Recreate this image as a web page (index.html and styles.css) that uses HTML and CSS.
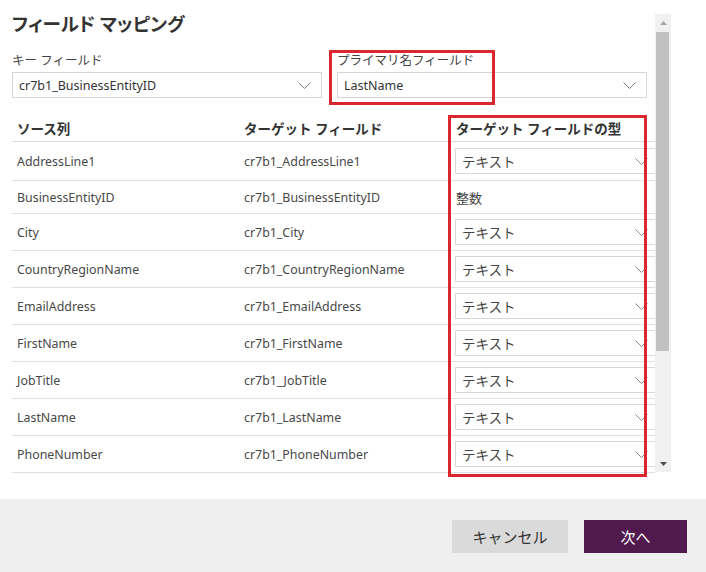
FILE: index.html
```html
<!DOCTYPE html>
<html lang="ja">
<head>
<meta charset="utf-8">
<title>フィールド マッピング</title>
<link rel="stylesheet" href="styles.css">
</head>
<body>
<div class="dialog">
  <div class="main">
    <div class="scroll">
      <div class="content">
        <h1 class="title">フィールド マッピング</h1>
        <div class="fields">
          <div class="field">
            <div class="field-label">キー フィールド</div>
            <div class="select">
              <span>cr7b1_BusinessEntityID</span>
              <svg class="chev" width="13" height="7" viewBox="0 0 13 7"><path d="M0.5 0.5 L6.5 6.5 L12.5 0.5" fill="none" stroke="#7a7a7a" stroke-width="1"/></svg>
            </div>
          </div>
          <div class="field">
            <div class="field-label">プライマリ名フィールド</div>
            <div class="select">
              <span>LastName</span>
              <svg class="chev" width="13" height="7" viewBox="0 0 13 7"><path d="M0.5 0.5 L6.5 6.5 L12.5 0.5" fill="none" stroke="#7a7a7a" stroke-width="1"/></svg>
            </div>
          </div>
        </div>

        <div class="table">
          <div class="row head">
            <div class="cell">ソース列</div>
            <div class="cell">ターゲット フィールド</div>
            <div class="cell">ターゲット フィールドの型</div>
          </div>
          <div class="row first">
            <div class="cell">AddressLine1</div>
            <div class="cell">cr7b1_AddressLine1</div>
            <div class="cell type"><div class="tselect"><span>テキスト</span><svg class="chev" width="13" height="7" viewBox="0 0 13 7"><path d="M0.5 0.5 L6.5 6.5 L12.5 0.5" fill="none" stroke="#8a8a8a" stroke-width="1"/></svg></div></div>
          </div>
          <div class="row plain">
            <div class="cell">BusinessEntityID</div>
            <div class="cell">cr7b1_BusinessEntityID</div>
            <div class="cell type-text">整数</div>
          </div>
          <div class="row">
            <div class="cell">City</div>
            <div class="cell">cr7b1_City</div>
            <div class="cell type"><div class="tselect"><span>テキスト</span><svg class="chev" width="13" height="7" viewBox="0 0 13 7"><path d="M0.5 0.5 L6.5 6.5 L12.5 0.5" fill="none" stroke="#8a8a8a" stroke-width="1"/></svg></div></div>
          </div>
          <div class="row">
            <div class="cell">CountryRegionName</div>
            <div class="cell">cr7b1_CountryRegionName</div>
            <div class="cell type"><div class="tselect"><span>テキスト</span><svg class="chev" width="13" height="7" viewBox="0 0 13 7"><path d="M0.5 0.5 L6.5 6.5 L12.5 0.5" fill="none" stroke="#8a8a8a" stroke-width="1"/></svg></div></div>
          </div>
          <div class="row">
            <div class="cell">EmailAddress</div>
            <div class="cell">cr7b1_EmailAddress</div>
            <div class="cell type"><div class="tselect"><span>テキスト</span><svg class="chev" width="13" height="7" viewBox="0 0 13 7"><path d="M0.5 0.5 L6.5 6.5 L12.5 0.5" fill="none" stroke="#8a8a8a" stroke-width="1"/></svg></div></div>
          </div>
          <div class="row">
            <div class="cell">FirstName</div>
            <div class="cell">cr7b1_FirstName</div>
            <div class="cell type"><div class="tselect"><span>テキスト</span><svg class="chev" width="13" height="7" viewBox="0 0 13 7"><path d="M0.5 0.5 L6.5 6.5 L12.5 0.5" fill="none" stroke="#8a8a8a" stroke-width="1"/></svg></div></div>
          </div>
          <div class="row">
            <div class="cell">JobTitle</div>
            <div class="cell">cr7b1_JobTitle</div>
            <div class="cell type"><div class="tselect"><span>テキスト</span><svg class="chev" width="13" height="7" viewBox="0 0 13 7"><path d="M0.5 0.5 L6.5 6.5 L12.5 0.5" fill="none" stroke="#8a8a8a" stroke-width="1"/></svg></div></div>
          </div>
          <div class="row">
            <div class="cell">LastName</div>
            <div class="cell">cr7b1_LastName</div>
            <div class="cell type"><div class="tselect"><span>テキスト</span><svg class="chev" width="13" height="7" viewBox="0 0 13 7"><path d="M0.5 0.5 L6.5 6.5 L12.5 0.5" fill="none" stroke="#8a8a8a" stroke-width="1"/></svg></div></div>
          </div>
          <div class="row">
            <div class="cell">PhoneNumber</div>
            <div class="cell">cr7b1_PhoneNumber</div>
            <div class="cell type"><div class="tselect"><span>テキスト</span><svg class="chev" width="13" height="7" viewBox="0 0 13 7"><path d="M0.5 0.5 L6.5 6.5 L12.5 0.5" fill="none" stroke="#8a8a8a" stroke-width="1"/></svg></div></div>
          </div>
        </div>
      </div>
    </div>
    <div class="scrollbar">
      <div class="sb-btn sb-up"><svg width="7" height="4" viewBox="0 0 7 4"><path d="M0 4 L3.5 0 L7 4 Z" fill="#a6a6a6"/></svg></div>
      <div class="sb-track"><div class="sb-thumb"></div></div>
      <div class="sb-btn sb-down"><svg width="7" height="4" viewBox="0 0 7 4"><path d="M0 0 L7 0 L3.5 4 Z" fill="#505050"/></svg></div>
    </div>
  </div>
  <div class="footer">
    <button class="btn btn-secondary">キャンセル</button>
    <button class="btn btn-primary">次へ</button>
  </div>
  <div class="mark mark-primary"></div>
  <div class="mark mark-type"></div>
</div>
</body>
</html>
```

FILE: styles.css
```css
* { box-sizing: border-box; }
html, body { margin: 0; padding: 0; background: #ffffff; }
body {
  font-family: "Noto Sans", "Noto Sans CJK JP", sans-serif;
  color: #333333;
}
.dialog {
  position: relative;
  width: 706px;
  height: 572px;
  display: flex;
  flex-direction: column;
  background: #ffffff;
}
.main {
  height: 499px;
  display: flex;
  align-items: flex-start;
}
.scroll {
  width: 655px;
  height: 461px;
  margin-top: 12px;
  overflow: hidden;
}
.content {
  padding-left: 12px;
  width: 668px;
}
.title {
  margin: 0;
  font-size: 18.5px;
  line-height: 24px;
  font-weight: 700;
  color: #333333;
  font-feature-settings: "palt";
  letter-spacing: 0;
}
.fields {
  display: flex;
  gap: 15px;
  margin-top: 17px;
}
.field { width: 310px; }
.field-label {
  font-size: 12.5px;
  line-height: 16px;
  color: #444444;
  margin-bottom: 3px;
}
.select {
  height: 26px;
  border: 1px solid #d6d6d6;
  display: flex;
  align-items: center;
  justify-content: space-between;
  padding: 0 10px 0 6px;
  font-size: 12.5px;
  color: #333333;
}
.chev { display: block; flex: none; }

.table {
  margin-top: 17px;
  width: 650px;
}
.row {
  display: grid;
  grid-template-columns: 227px 211px 212px;
  height: 37px;
  border-bottom: 1px solid #e1e1e1;
  align-items: center;
  font-size: 12.4px;
  color: #484848;
}
.row.head {
  height: 27px;
  font-weight: 700;
  font-size: 13.5px;
  color: #333333;
  border-bottom-color: #dcdcdc;
}
.row.first { height: 39px; }
.row.plain { height: 33px; }
.cell { padding-left: 5px; white-space: nowrap; }
.row.head .cell:nth-child(3) { padding-left: 6px; }
.cell.type { padding-left: 5px; }
.cell.type-text { padding-left: 6px; font-size: 13px; color: #444444; }
.tselect {
  width: 206px;
  height: 26px;
  border: 1px solid #d8d8d8;
  display: flex;
  align-items: center;
  justify-content: space-between;
  padding: 0 12px 0 6px;
  font-size: 13.5px;
  color: #444444;
}

.scrollbar {
  width: 16px;
  height: 458px;
  margin-top: 14px;
  background: #f0f0f0;
  display: flex;
  flex-direction: column;
}
.sb-btn {
  height: 18px;
  display: flex;
  align-items: center;
  justify-content: center;
}
.sb-down { height: 17px; }
.sb-track { flex: 1; }
.sb-thumb {
  width: 13px;
  margin-left: 1px;
  height: 319px;
  background: #c1c1c1;
}

.footer {
  flex: 1;
  background: #efefef;
  display: flex;
  justify-content: flex-end;
  align-items: flex-start;
  gap: 16px;
  padding: 21px 19px 0 0;
}
.btn {
  height: 33px;
  border: none;
  font-family: "Noto Sans", "Noto Sans CJK JP", sans-serif;
  font-size: 15px;
  padding: 0;
}
.btn-secondary {
  width: 116px;
  background: #dadada;
  color: #333333;
}
.btn-primary {
  width: 103px;
  background: #501a4e;
  color: #ffffff;
}

.mark {
  position: absolute;
  border: 3px solid #d9262f;
  pointer-events: none;
}
.mark-primary {
  left: 329px;
  top: 50px;
  width: 166px;
  height: 55px;
}
.mark-type {
  left: 448px;
  top: 115px;
  width: 199px;
  height: 362px;
}
```
